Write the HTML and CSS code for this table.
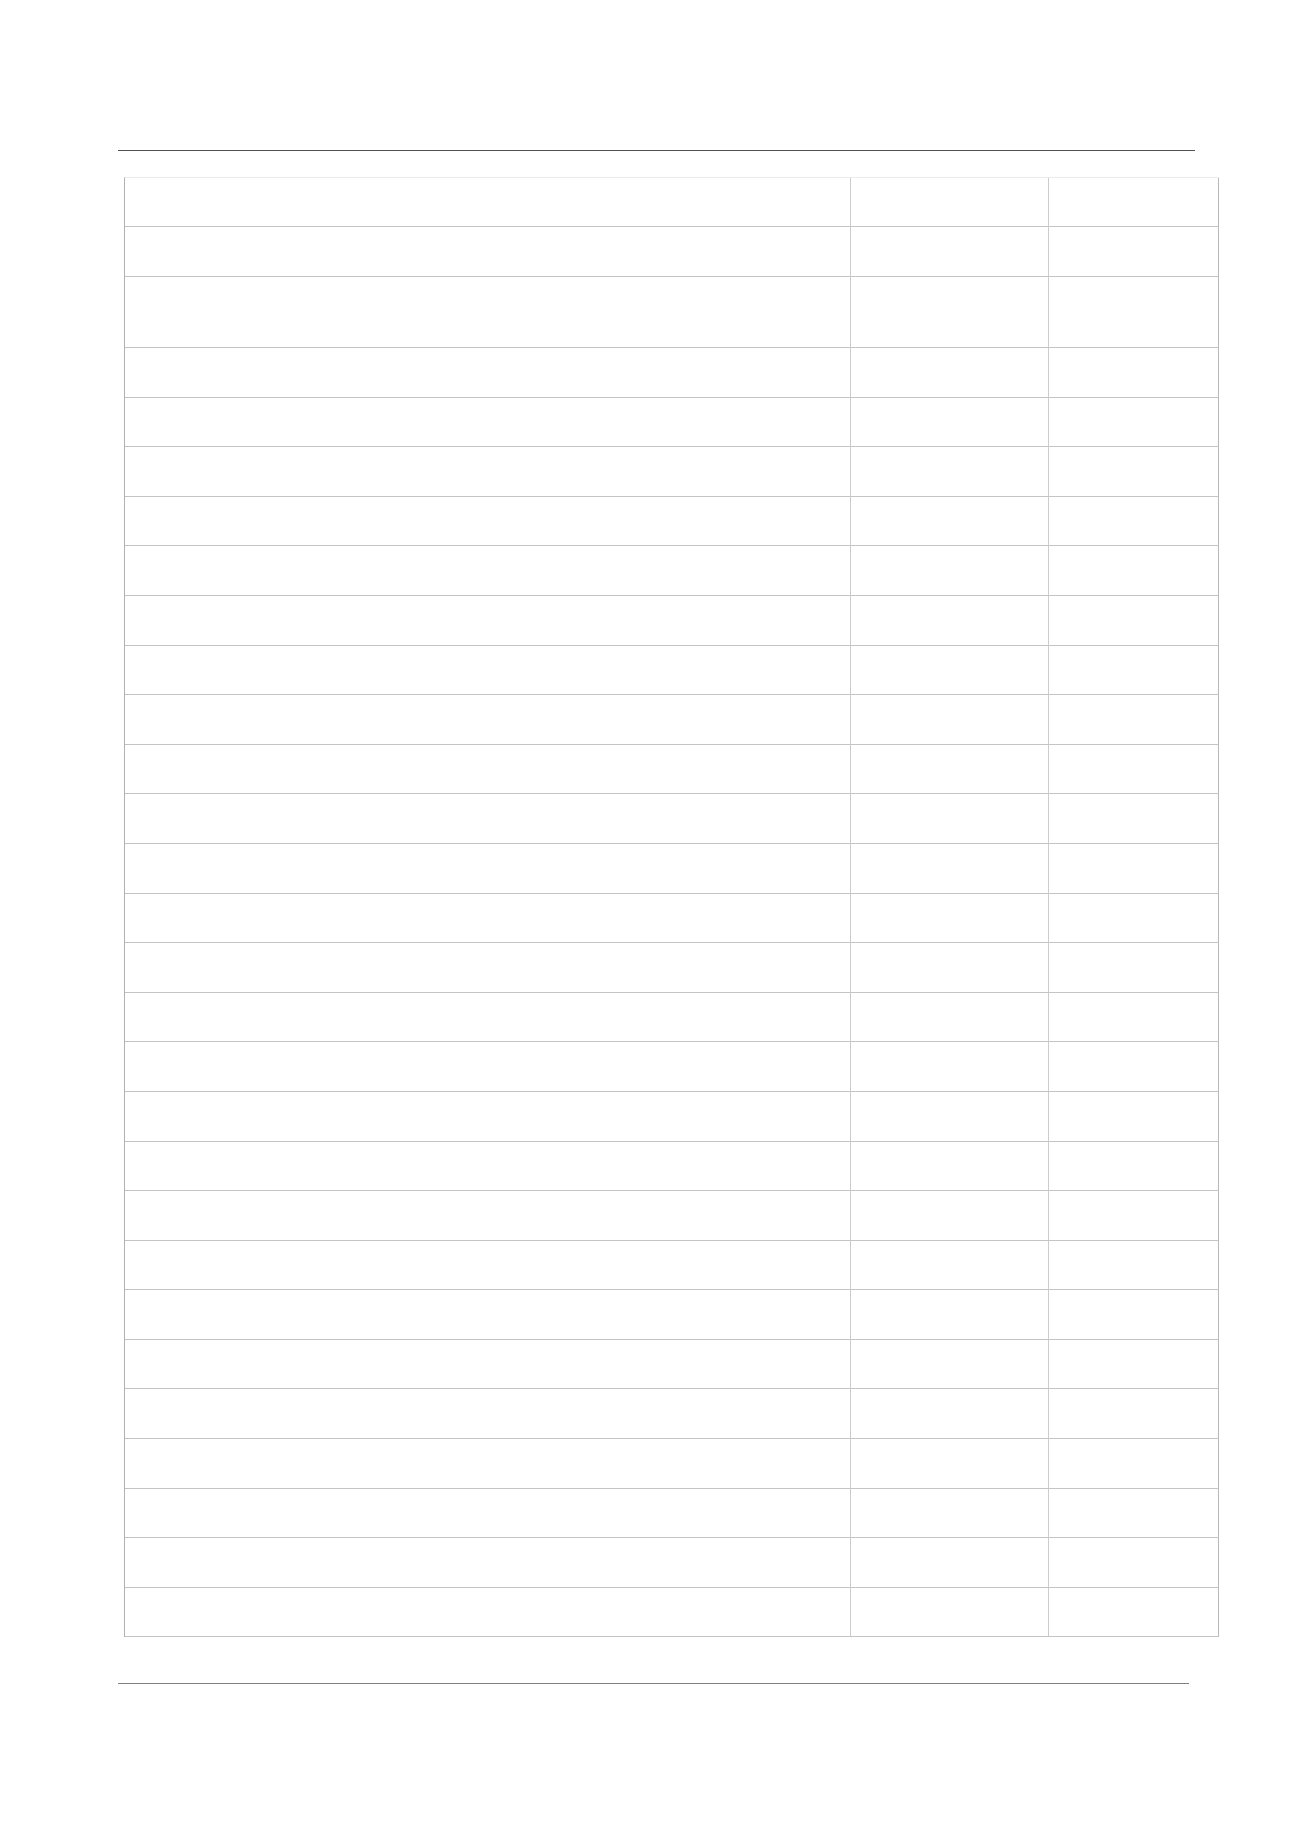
FILE: index.html
```html
<!DOCTYPE html>
<html>
<head>
<meta charset="utf-8">
<link rel="stylesheet" href="styles.css">
</head>
<body>
<div class="page">
  <div class="rule rule-top"></div>
  <div class="sheet">
    <div class="row head"><div class="cell c1"></div><div class="cell c2"></div><div class="cell c3"></div></div>
    <div class="row r2"><div class="cell c1"></div><div class="cell c2"></div><div class="cell c3"></div></div>
    <div class="row tall"><div class="cell c1"></div><div class="cell c2"></div><div class="cell c3"></div></div>
    <div class="row"><div class="cell c1"></div><div class="cell c2"></div><div class="cell c3"></div></div>
    <div class="row"><div class="cell c1"></div><div class="cell c2"></div><div class="cell c3"></div></div>
    <div class="row"><div class="cell c1"></div><div class="cell c2"></div><div class="cell c3"></div></div>
    <div class="row"><div class="cell c1"></div><div class="cell c2"></div><div class="cell c3"></div></div>
    <div class="row"><div class="cell c1"></div><div class="cell c2"></div><div class="cell c3"></div></div>
    <div class="row"><div class="cell c1"></div><div class="cell c2"></div><div class="cell c3"></div></div>
    <div class="row"><div class="cell c1"></div><div class="cell c2"></div><div class="cell c3"></div></div>
    <div class="row"><div class="cell c1"></div><div class="cell c2"></div><div class="cell c3"></div></div>
    <div class="row"><div class="cell c1"></div><div class="cell c2"></div><div class="cell c3"></div></div>
    <div class="row"><div class="cell c1"></div><div class="cell c2"></div><div class="cell c3"></div></div>
    <div class="row"><div class="cell c1"></div><div class="cell c2"></div><div class="cell c3"></div></div>
    <div class="row"><div class="cell c1"></div><div class="cell c2"></div><div class="cell c3"></div></div>
    <div class="row"><div class="cell c1"></div><div class="cell c2"></div><div class="cell c3"></div></div>
    <div class="row"><div class="cell c1"></div><div class="cell c2"></div><div class="cell c3"></div></div>
    <div class="row"><div class="cell c1"></div><div class="cell c2"></div><div class="cell c3"></div></div>
    <div class="row"><div class="cell c1"></div><div class="cell c2"></div><div class="cell c3"></div></div>
    <div class="row"><div class="cell c1"></div><div class="cell c2"></div><div class="cell c3"></div></div>
    <div class="row"><div class="cell c1"></div><div class="cell c2"></div><div class="cell c3"></div></div>
    <div class="row"><div class="cell c1"></div><div class="cell c2"></div><div class="cell c3"></div></div>
    <div class="row"><div class="cell c1"></div><div class="cell c2"></div><div class="cell c3"></div></div>
    <div class="row"><div class="cell c1"></div><div class="cell c2"></div><div class="cell c3"></div></div>
    <div class="row"><div class="cell c1"></div><div class="cell c2"></div><div class="cell c3"></div></div>
    <div class="row"><div class="cell c1"></div><div class="cell c2"></div><div class="cell c3"></div></div>
    <div class="row"><div class="cell c1"></div><div class="cell c2"></div><div class="cell c3"></div></div>
    <div class="row"><div class="cell c1"></div><div class="cell c2"></div><div class="cell c3"></div></div>
    <div class="row"><div class="cell c1"></div><div class="cell c2"></div><div class="cell c3"></div></div>
  </div>
  <div class="rule rule-bottom"></div>
</div>
</body>
</html>
```
FILE: styles.css
```css
html, body {
  margin: 0;
  padding: 0;
  background: #ffffff;
  font-family: "Liberation Sans", Arial, sans-serif;
}
.page {
  display: flex;
  flex-direction: column;
  align-items: flex-start;
  padding-top: 150px;
  min-height: 1841px;
  box-sizing: border-box;
}
.rule {
  height: 1px;
  margin-left: 118px;
}
.rule-top {
  width: 1077px;
  background: #505050;
}
.rule-bottom {
  width: 1071px;
  background: #808080;
  margin-top: 46px;
}
.sheet {
  margin-top: 26px;
  margin-left: 124px;
  border-left: 1px solid #b0b0b0;
  border-top: 1px solid #ececec;
  display: flex;
  flex-direction: column;
}
.row {
  display: grid;
  grid-template-columns: 726px 198px 170px;
  height: 49.6px;
  box-sizing: border-box;
}
.row.head { height: 49px; }
.row.r2 { height: 50px; }
.row.tall { height: 71px; }
.cell {
  border-right: 1px solid #cccccc;
  border-bottom: 1px solid #c4c4c4;
  box-sizing: border-box;
}
.cell.c3 {
  border-right-color: #b8b8b8;
}
```
